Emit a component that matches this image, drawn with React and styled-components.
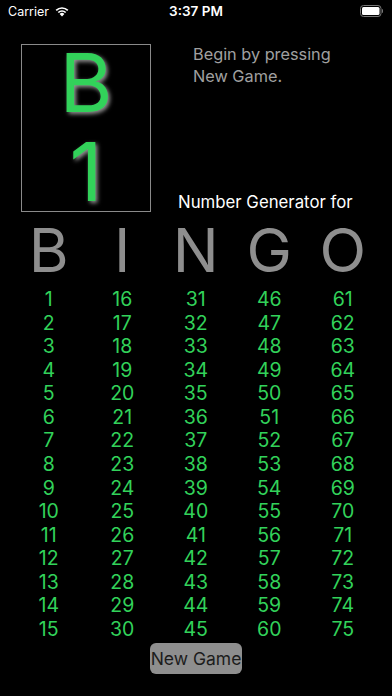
import React from 'react'
import styled, { createGlobalStyle } from 'styled-components'

const Global = createGlobalStyle`
  html, body {
    margin: 0;
    padding: 0;
    background: #000;
  }
  body {
    font-family: Inter, "Liberation Sans", sans-serif;
  }
`

const columns = [0, 1, 2, 3, 4].map((c) =>
  Array.from({ length: 15 }, (_, r) => c * 15 + r + 1)
)

export default () => (
  <Screen>
    <Global />
    <StatusBar>
      <Carrier>
        Carrier
        <svg width="16" height="12" viewBox="0 0 16 12">
          <path d="M8 11.5 L5.6 8.9 A3.5 3.5 0 0 1 10.4 8.9 Z" fill="#fff" />
          <path d="M3.7 6.9 A6.3 6.3 0 0 1 12.3 6.9 L11.1 8.1 A4.6 4.6 0 0 0 4.9 8.1 Z" fill="#fff" />
          <path d="M1.6 4.7 A9.3 9.3 0 0 1 14.4 4.7 L13.2 5.9 A7.6 7.6 0 0 0 2.8 5.9 Z" fill="#fff" />
        </svg>
      </Carrier>
      <Clock>3:37 PM</Clock>
      <Battery>
        <svg width="23" height="12" viewBox="0 0 23 12">
          <rect x="0.5" y="0.5" width="20.5" height="11" rx="3" fill="none" stroke="#777" />
          <rect x="2" y="2" width="17.5" height="8" rx="1.5" fill="#fff" />
          <path d="M22 4 a1.2 2 0 0 1 0 4 Z" fill="#777" />
        </svg>
      </Battery>
    </StatusBar>

    <Top>
      <CallBox>
        <BigGlyph>B</BigGlyph>
        <BigGlyph>1</BigGlyph>
      </CallBox>
      <Side>
        <Hint>Begin by pressing<br />New Game.</Hint>
        <Caption>Number Generator for</Caption>
      </Side>
    </Top>

    <Board>
      {'BINGO'.split('').map((l) => (
        <Letter key={l}>{l}</Letter>
      ))}
      {columns.map((col, i) => (
        <Column key={i}>
          {col.map((n) => (
            <Num key={n}>{n}</Num>
          ))}
        </Column>
      ))}
    </Board>

    <Footer>
      <NewGame>New Game</NewGame>
    </Footer>
  </Screen>
)

const Screen = styled.div`
  width: 392px;
  height: 696px;
  background: #000;
  overflow: hidden;
`

const StatusBar = styled.div`
  height: 22px;
  display: flex;
  align-items: center;
  justify-content: space-between;
  padding: 0 9px 0 8px;
  color: #fff;
  position: relative;
`

const Carrier = styled.div`
  display: flex;
  align-items: center;
  gap: 5px;
  font-size: 12.5px;
  svg {
    margin-top: -1px;
  }
`

const Clock = styled.div`
  position: absolute;
  left: 0;
  right: 0;
  text-align: center;
  font-size: 13.5px;
  font-weight: 600;
`

const Battery = styled.div`
  display: flex;
  align-items: center;
`

const Top = styled.div`
  display: flex;
  margin-top: 22px;
  padding-left: 21px;
`

const CallBox = styled.div`
  box-sizing: border-box;
  width: 130px;
  height: 168px;
  border: 1px solid #8a8a8a;
  display: flex;
  flex-direction: column;
  align-items: center;
  justify-content: space-between;
`

const BigGlyph = styled.div`
  font-size: 81px;
  line-height: 77px;
  height: 77px;
  color: #32d25a;
  text-shadow: 2px 2px 4px rgba(200, 200, 200, 0.75);
`

const Side = styled.div`
  display: flex;
  flex-direction: column;
  justify-content: space-between;
  padding-left: 27px;
  height: 168px;
`

const Hint = styled.div`
  padding-left: 15px;
  font-size: 16.3px;
  line-height: 22px;
  color: #a0a0a0;
  margin-top: -1px;
`

const Caption = styled.div`
  font-size: 16.8px;
  line-height: 20px;
  color: #fff;
`

const Board = styled.div`
  display: grid;
  grid-template-columns: repeat(5, 73.5px);
  padding-left: 12px;
  margin-top: 4px;
`

const Letter = styled.div`
  text-align: center;
  font-size: 61px;
  line-height: 68px;
  color: #8e8e8e;
`

const Column = styled.div`
  display: flex;
  flex-direction: column;
  align-items: center;
  padding-top: 4px;
`

const Num = styled.div`
  font-size: 19.5px;
  line-height: 23.57px;
  color: #32d25a;
`

const Footer = styled.div`
  display: flex;
  justify-content: center;
  margin-top: 2px;
`

const NewGame = styled.button`
  width: 92px;
  height: 31px;
  padding: 0;
  border: none;
  border-radius: 6px;
  background: #8e8e8e;
  color: #1c1c1c;
  font-family: Inter, "Liberation Sans", sans-serif;
  font-size: 17.5px;
  white-space: nowrap;
`
